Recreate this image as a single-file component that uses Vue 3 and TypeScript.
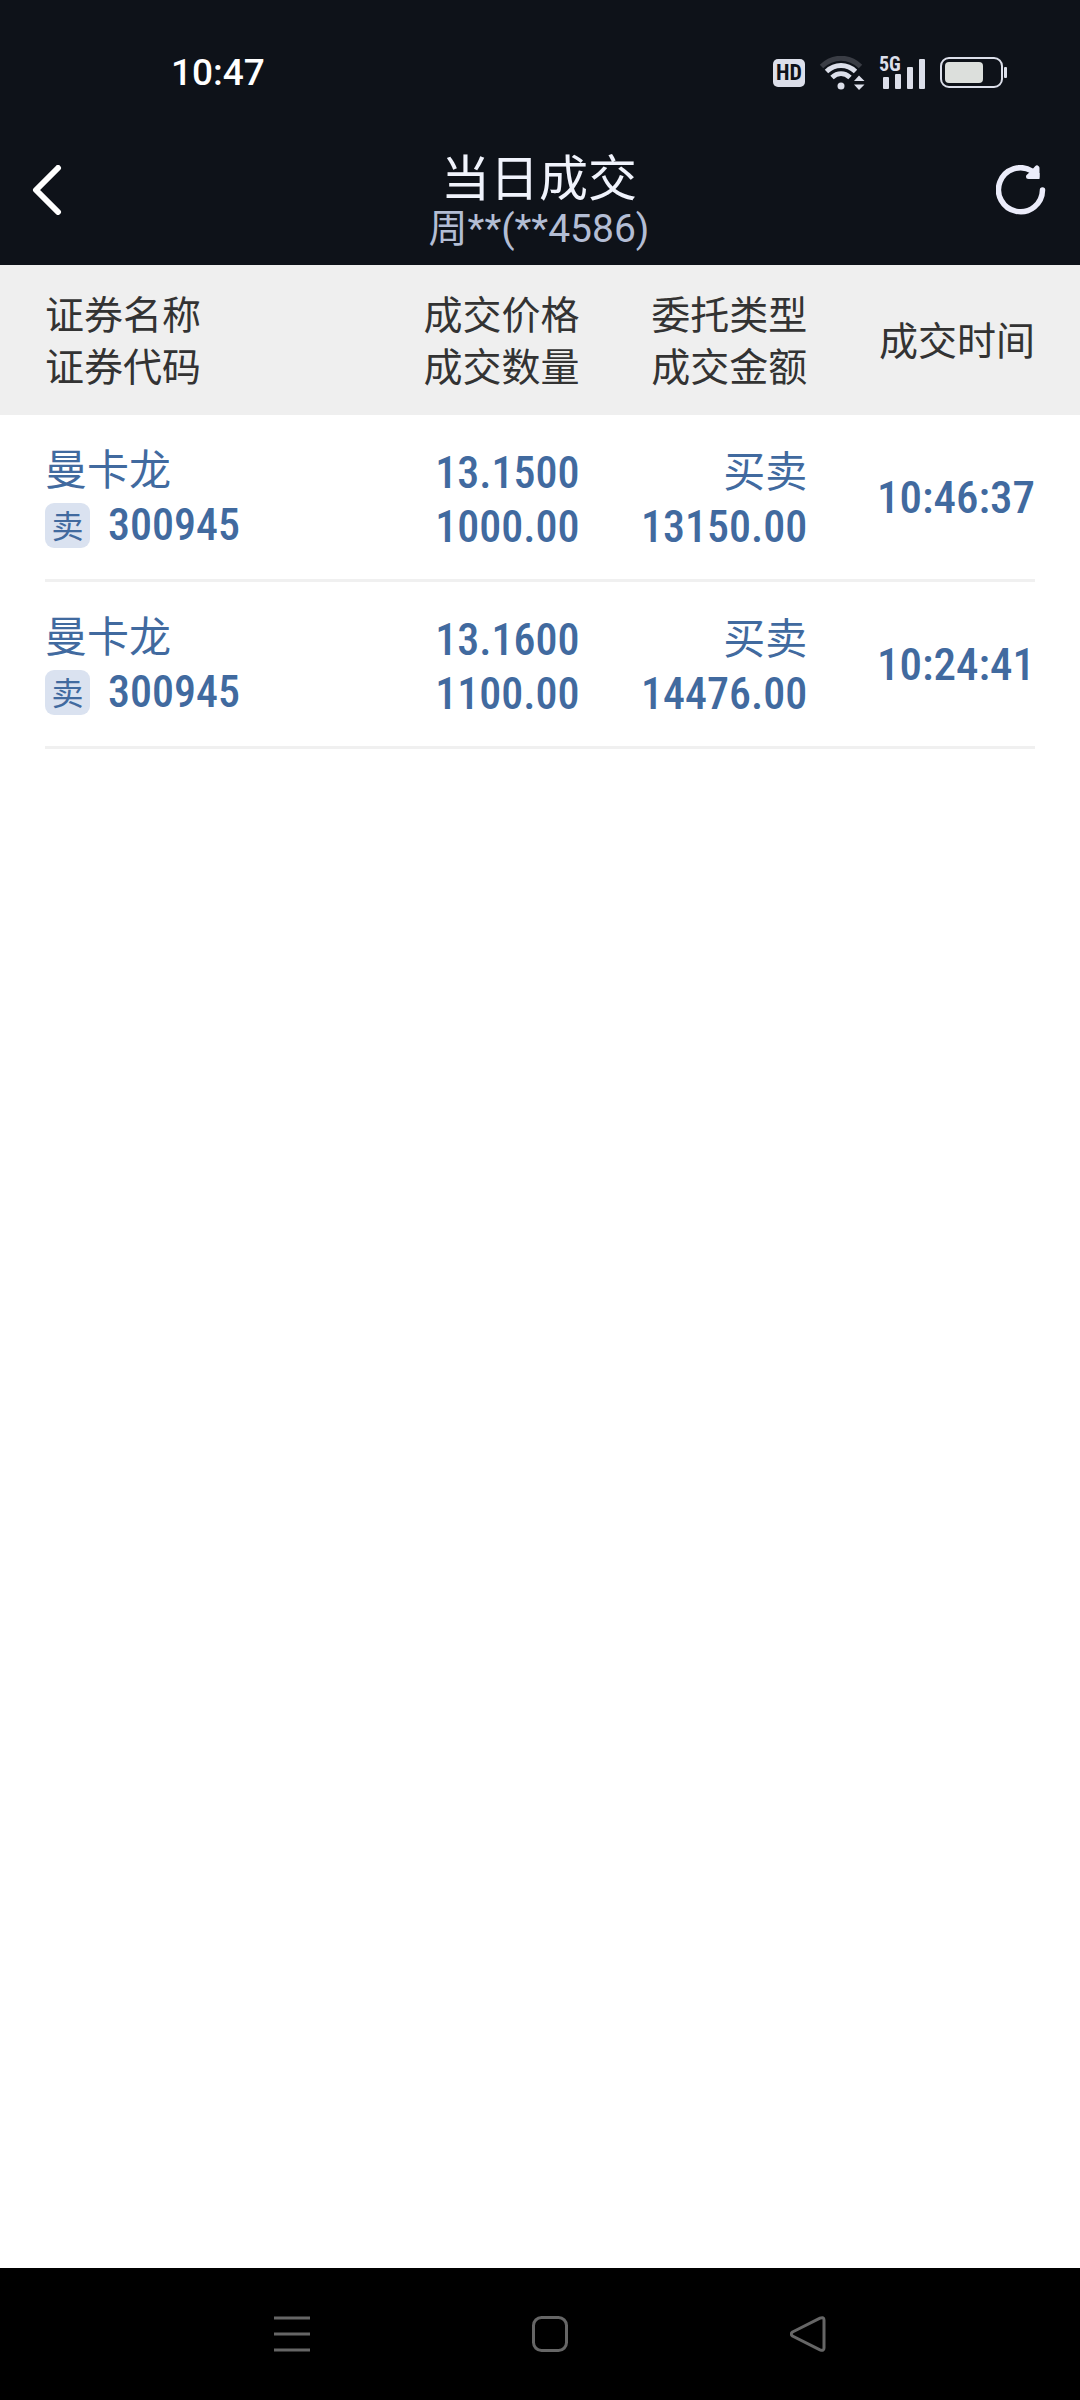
<script setup lang="ts">
interface Trade {
  name: string
  code: string
  side: string
  price: string
  volume: string
  type: string
  amount: string
  time: string
}

const trades: Trade[] = [
  { name: '曼卡龙', code: '300945', side: '卖', price: '13.1500', volume: '1000.00', type: '买卖', amount: '13150.00', time: '10:46:37' },
  { name: '曼卡龙', code: '300945', side: '卖', price: '13.1600', volume: '1100.00', type: '买卖', amount: '14476.00', time: '10:24:41' },
]
</script>

<template>
  <div class="screen">
    <div class="status-bar">
      <time class="clock">10:47</time>
      <div class="indicators">
        <span class="hd">HD</span>
        <svg width="48" height="34" viewBox="-2 0 48 34" fill="none" aria-hidden="true">
          <path d="M1.5 10.5C13 -0.500 29 -0.500 40.500 10.500" stroke="#3a3d45" stroke-width="5" />
          <path d="M6.500 15.500C15 7.500 27 7.500 35.500 15.500" stroke="#dcdfea" stroke-width="5" />
          <path d="M12 21.500C17.500 16.500 24.500 16.500 30 21.500" stroke="#dcdfea" stroke-width="5" />
          <circle cx="21" cy="30" r="3.500" fill="#dcdfea" />
          <path d="M34 25L39 19.500L44.500 25ZM34 28.500L39 34L44.500 28.500Z" fill="#dcdfea" />
        </svg>
        <svg width="48" height="40" viewBox="0 0 48 40" fill="#dcdfea" aria-hidden="true">
          <text x="0" y="18" class="network">5G</text>
          <rect x="4" y="24" width="6" height="12" rx="1" />
          <rect x="16" y="21" width="6" height="15" rx="1" />
          <rect x="28" y="14" width="6" height="22" rx="1" />
          <rect x="40" y="6" width="6" height="30" rx="1" />
        </svg>
        <svg width="68" height="32" viewBox="0 0 68 32" fill="none" aria-hidden="true">
          <rect x="1" y="1" width="61" height="29" rx="8" stroke="#dcdfea" stroke-width="2" />
          <rect x="5" y="5" width="38" height="21" rx="4" fill="#dcdfdc" />
          <rect x="64" y="10" width="3" height="11" rx="1" fill="#dcdfea" />
        </svg>
      </div>
    </div>

    <header class="title-bar">
      <button class="icon-button" type="button" aria-label="返回">
        <svg width="30" height="50" viewBox="0 0 30 50" fill="none">
          <path d="M26 3L4 25L26 47" stroke="#fff" stroke-width="6" stroke-linecap="round" stroke-linejoin="round" />
        </svg>
      </button>
      <div class="titles">
        <h1>当日成交</h1>
        <p>周**(**4586)</p>
      </div>
      <button class="icon-button" type="button" aria-label="刷新">
        <svg width="50" height="50" viewBox="0 0 50 50" fill="none">
          <path d="M46.500 25A22 22 0 1 1 36 6" stroke="#ebecfa" stroke-width="5.500" stroke-linecap="round" />
          <path d="M41 3V11.500H32.500L37 7.500Z" fill="#ebecfa" stroke="#ebecfa" stroke-width="5" stroke-linejoin="round" />
          <path d="M37 8H43.500V14H37Z" fill="#ebecfa" />
        </svg>
      </button>
    </header>

    <main class="content">
      <table>
        <thead>
          <tr>
            <th class="col-name" scope="col">证券名称<br />证券代码</th>
            <th class="col-price" scope="col">成交价格<br />成交数量</th>
            <th class="col-amount" scope="col">委托类型<br />成交金额</th>
            <th class="col-time" scope="col">成交时间</th>
          </tr>
        </thead>
        <tbody>
          <tr v-for="trade in trades" :key="trade.time">
            <td>
              <div class="line">{{ trade.name }}</div>
              <div class="line code">
                <span class="badge">{{ trade.side }}</span>
                <span class="number">{{ trade.code }}</span>
              </div>
            </td>
            <td>
              <div class="line number">{{ trade.price }}</div>
              <div class="line number">{{ trade.volume }}</div>
            </td>
            <td>
              <div class="line">{{ trade.type }}</div>
              <div class="line number">{{ trade.amount }}</div>
            </td>
            <td><div class="line number time">{{ trade.time }}</div></td>
          </tr>
        </tbody>
      </table>
    </main>

    <nav class="system-nav" aria-label="系统导航">
      <button type="button" aria-label="最近任务">
        <svg width="36" height="36" viewBox="0 0 36 36" fill="none" stroke="#666" stroke-width="3">
          <path d="M0 2H36M0 18H36M0 34H36" />
        </svg>
      </button>
      <button type="button" aria-label="主页">
        <svg width="36" height="36" viewBox="0 0 36 36" fill="none" stroke="#666" stroke-width="3">
          <rect x="1.500" y="1.500" width="33" height="33" rx="8" />
        </svg>
      </button>
      <button type="button" aria-label="后退">
        <svg width="36" height="36" viewBox="0 0 36 36" fill="none" stroke="#666" stroke-width="3">
          <path d="M2.500 16L30 2.200Q34 0.500 34 4V32Q34 35.500 30 33.800L2.500 20Q0 18 2.500 16Z" />
        </svg>
      </button>
    </nav>
  </div>
</template>

<style>
body {
  margin: 0;
}
</style>

<style scoped>
.screen {
  min-height: 100vh;
  display: flex;
  flex-direction: column;
  background: #fff;
  font-family: Roboto, "Noto Sans CJK SC", sans-serif;
}

button {
  margin: 0;
  padding: 0;
  border: 0;
  background: none;
}

svg {
  display: block;
}

.status-bar {
  display: flex;
  justify-content: space-between;
  align-items: center;
  height: 120px;
  padding: 26px 72px 0 171px;
  box-sizing: border-box;
  background: #0e1219;
  color: #fff;
}

.clock {
  font-size: 37px;
  font-weight: 500;
  line-height: 48px;
}

.indicators {
  display: flex;
  align-items: center;
  gap: 13px;
}

.hd {
  width: 32px;
  height: 28px;
  border-radius: 5px;
  background: #dcdfea;
  color: #0e1219;
  font-family: "Roboto Condensed", Roboto, sans-serif;
  font-size: 22px;
  font-weight: 700;
  line-height: 28px;
  text-align: center;
}

.network {
  font-family: "Roboto Condensed", Roboto, sans-serif;
  font-size: 20px;
  font-weight: 700;
}

.title-bar {
  display: flex;
  justify-content: space-between;
  align-items: center;
  height: 145px;
  padding: 0 34px 6px 32px;
  box-sizing: border-box;
  background: #0e1219;
}

.icon-button {
  display: flex;
  width: 50px;
}

.titles {
  padding-top: 26px;
  text-align: center;
}

h1 {
  margin: 0;
  color: #f0f3fc;
  font-size: 49px;
  font-weight: 400;
  line-height: 52px;
}

p {
  margin: 0;
  color: #b3bdd4;
  font-size: 39px;
  line-height: 46px;
}

.content {
  flex: 1;
  padding: 0 45px;
}

table {
  width: 100%;
  table-layout: fixed;
  border-spacing: 0;
}

th {
  height: 150px;
  padding: 4px 0 0;
  box-sizing: border-box;
  background: #efefef;
  color: #333;
  font-size: 39px;
  font-weight: 400;
  line-height: 52px;
  text-align: right;
  white-space: nowrap;
}

th:first-child {
  box-shadow: -45px 0 #efefef;
}

th:last-child {
  box-shadow: 45px 0 #efefef;
}

.col-name {
  width: 27%;
}

.col-price {
  width: 27%;
}

.col-amount {
  width: 23%;
}

.col-time {
  width: 23%;
}

td {
  height: 167px;
  padding: 6px 0 0;
  box-sizing: border-box;
  border-bottom: 3px solid #f0f0f0;
  color: #416a9f;
  font-size: 42px;
  text-align: right;
  vertical-align: middle;
  white-space: nowrap;
}

td:first-child,
td:last-child {
  padding-top: 2px;
}

th:first-child,
td:first-child {
  text-align: left;
}

.line {
  line-height: 54px;
}

.number {
  font-family: "Roboto Condensed", Roboto, sans-serif;
  font-size: 44px;
  font-weight: 500;
}

.time {
  font-size: 45px;
}

.code {
  display: flex;
  align-items: center;
  gap: 18px;
}

.badge {
  width: 45px;
  height: 45px;
  border-radius: 9px;
  background: #dae2f0;
  font-size: 32px;
  line-height: 48px;
  text-align: center;
}

.system-nav {
  display: flex;
  justify-content: center;
  align-items: center;
  gap: 222px;
  height: 132px;
  padding-left: 20px;
  box-sizing: border-box;
  background: #000;
}
</style>
